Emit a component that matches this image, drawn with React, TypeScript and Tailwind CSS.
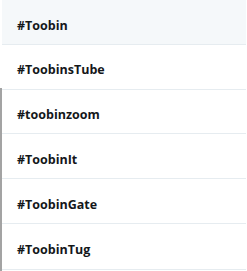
import React from 'react';

const tags = ['#Toobin', '#ToobinsTube', '#toobinzoom', '#ToobinIt', '#ToobinGate', '#ToobinTug'];

const App = () => {
  return (
    <div className="w-[247px] h-[271px] bg-white flex overflow-hidden" style={{ fontFamily: '"Open Sans", "Liberation Sans", sans-serif' }}>
      {/* franja de la página de fondo */}
      <div className="w-[2px] flex flex-col">
        <div className="h-[88px] bg-white"></div>
        <div className="flex-1 bg-[#a3a3a3]"></div>
      </div>

      {/* lista de sugerencias */}
      <div className="w-[244px] h-[270px] flex flex-col bg-white border-b border-[#e6ecf0]">
        {tags.map((tag, i) => (
          <div
            key={tag}
            className={`h-[45px] flex items-center pl-[15px] pt-[8px] border-b border-[#e6ecf0] last:border-b-0 ${i === 0 ? 'bg-[#f5f8fa]' : 'bg-white'}`}
          >
            <span className="text-[12.5px] font-bold text-[#14171a]">{tag}</span>
          </div>
        ))}
      </div>
    </div>
  );
};

export default App;
